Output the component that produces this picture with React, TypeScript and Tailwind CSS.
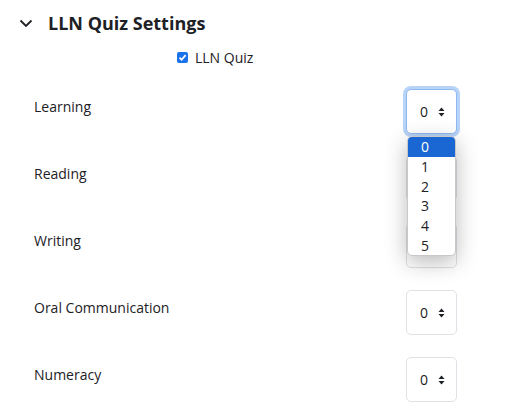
import React from "react";

function Arrows() {
  return (
    <svg width="7" height="10" viewBox="0 0 7 10" className="ml-[10px]">
      <path d="M3.5 0.5 L6.5 4 L0.5 4 Z" fill="#1d2125" />
      <path d="M3.5 9.5 L6.5 6 L0.5 6 Z" fill="#1d2125" />
    </svg>
  );
}

function Select({ focused }: { focused?: boolean }) {
  return (
    <div
      className={
        "w-[51px] h-[45px] rounded-[5px] border bg-white flex items-center justify-center pl-[2px] " +
        (focused
          ? "border-[#8fb8f0] shadow-[0_0_0_3px_#b7d3f7]"
          : "border-[#dee2e6]")
      }
    >
      <span className="text-[14px] text-[#1d2125]">0</span>
      <Arrows />
    </div>
  );
}

const rows = ["Learning", "Reading", "Writing", "Oral Communication", "Numeracy"];

export default function App() {
  return (
    <div
      className="relative w-[532px] h-[418px] bg-white overflow-hidden"
      style={{ fontFamily: '"Open Sans", "Noto Sans", sans-serif' }}
    >
      <div className="flex items-center h-[30px] mt-[8px] pl-[19px]">
        <svg width="14" height="9" viewBox="0 0 14 9" className="mr-[15px]">
          <path d="M1.5 1.5 L7 7 L12.5 1.5" fill="none" stroke="#1d2125" strokeWidth="1.8" />
        </svg>
        <h2 className="text-[18px] font-bold text-[#1d2125] leading-none">LLN Quiz Settings</h2>
      </div>
      <div className="flex items-center h-[20px] mt-[9px] pl-[177px]">
        <span className="w-[11px] h-[11px] rounded-[2px] bg-[#1a73e8] flex items-center justify-center">
          <svg width="9" height="9" viewBox="0 0 9 9">
            <path d="M1.5 4.7 L3.6 6.8 L7.6 2.2" fill="none" stroke="white" strokeWidth="1.8" />
          </svg>
        </span>
        <span className="ml-[7px] text-[14px] text-[#1d2125]">LLN Quiz</span>
      </div>
      <div className="flex flex-col gap-[22px] mt-[22px] pl-[34px] pr-[75px]">
        {rows.map((r, i) => (
          <div key={r} className="flex justify-between items-start h-[45px]">
            <span className="text-[14px] text-[#1d2125] pt-[7px]">{r}</span>
            <Select focused={i === 0} />
          </div>
        ))}
      </div>
      <div className="absolute left-[407px] top-[136px] w-[49px] bg-white rounded-[5px] overflow-hidden shadow-[0_6px_22px_rgba(0,0,0,0.28)] border border-[#c8c8c8]">
        {[0, 1, 2, 3, 4, 5].map((n) => (
          <div
            key={n}
            className={
              "h-[19.7px] flex items-center pl-[13px] text-[14px] " +
              (n === 0 ? "bg-[#1a66d2] text-white" : "text-[#1d2125]")
            }
          >
            {n}
          </div>
        ))}
      </div>
    </div>
  );
}
